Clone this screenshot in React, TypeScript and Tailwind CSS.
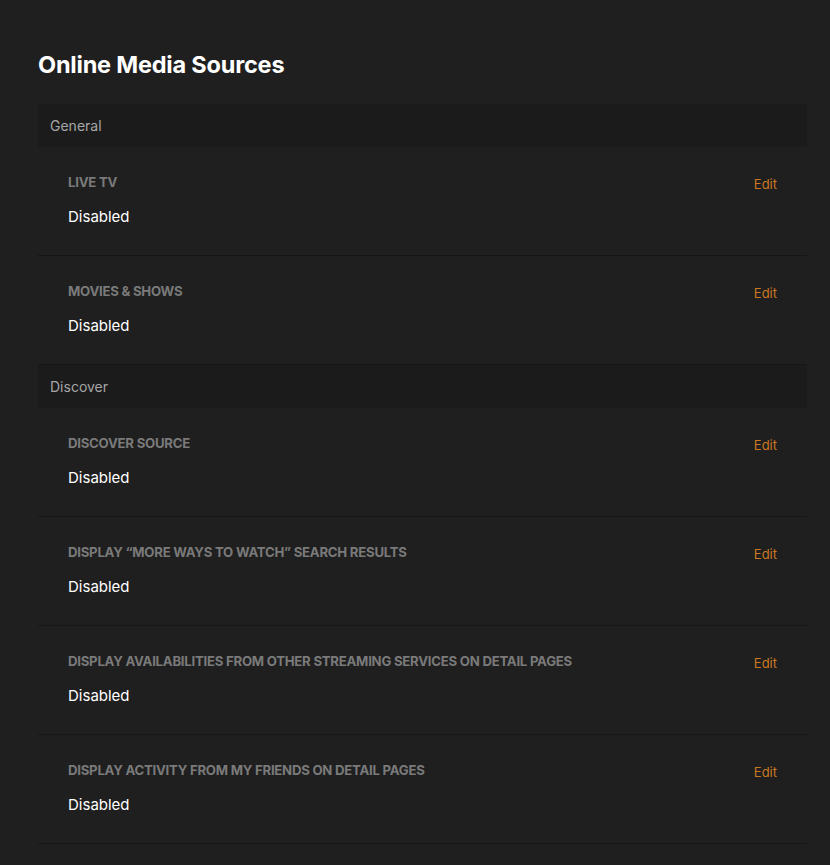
import React from "react";

type Row = { label: string; value: string };
type Section = { title: string; rows: Row[] };

const sections: Section[] = [
  {
    title: "General",
    rows: [
      { label: "Live TV", value: "Disabled" },
      { label: "Movies & Shows", value: "Disabled" },
    ],
  },
  {
    title: "Discover",
    rows: [
      { label: "Discover Source", value: "Disabled" },
      { label: "Display \u201CMore Ways to Watch\u201D Search Results", value: "Disabled" },
      { label: "Display Availabilities from other Streaming Services on Detail Pages", value: "Disabled" },
      { label: "Display Activity from my Friends on Detail Pages", value: "Disabled" },
    ],
  },
];

export default function App() {
  return (
    <div
      className="min-h-[865px] w-full bg-[#1f1f1f] text-white"
      style={{ fontFamily: "Inter, 'Open Sans', Arial, sans-serif" }}
    >
      <div className="pl-[38px] pr-[23px] pt-[50px]">
        <h1 className="text-[23.5px] leading-[30px] font-bold tracking-[-0.2px] text-white">
          Online Media Sources
        </h1>
        <div className="mt-[24px] flex flex-col">
          {sections.map((s) => (
            <div key={s.title} className="flex flex-col">
              <div className="flex h-[43px] items-center bg-[#1b1b1b] pl-[12px] text-[14px] text-[#a6a6a6]">
                {s.title}
              </div>
              {s.rows.map((r) => (
                <div
                  key={r.label}
                  className="flex items-start justify-between border-b border-[#161616] pl-[30px] pr-[30px] pt-[27px] pb-[28px]"
                >
                  <div className="flex flex-col gap-[17px]">
                    <div className="text-[13.2px] leading-[16px] font-bold uppercase tracking-[-0.25px] text-[#7a7a7a]">
                      {r.label}
                    </div>
                    <div className="text-[15px] leading-[20px] font-normal text-white">{r.value}</div>
                  </div>
                  <button className="mt-[2px] text-[13px] leading-[16px] text-[#cc7722]">Edit</button>
                </div>
              ))}
            </div>
          ))}
        </div>
      </div>
    </div>
  );
}
